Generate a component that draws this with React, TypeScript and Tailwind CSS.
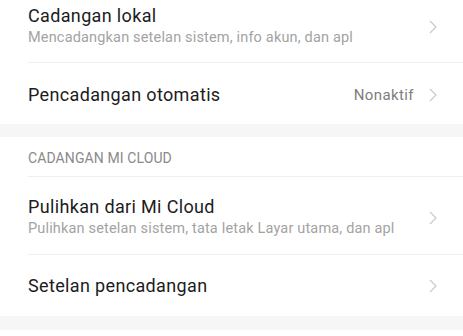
import React from 'react';

type Item = { title: string; subtitle?: string; value?: string };

function Chevron() {
  return (
    <svg width="8" height="14" viewBox="0 0 8 14" className="shrink-0">
      <path d="M1 1 L7 7 L1 13" fill="none" stroke="#c8c8c8" strokeWidth="1.1" />
    </svg>
  );
}

function Row({ item, cls }: { item: Item; cls: string }) {
  return (
    <div className={`flex items-center pl-[28px] pr-[26px] ${cls}`}>
      <div className="flex-1 min-w-0">
        <div className="text-[18px] leading-[22px] tracking-[0.35px] text-[#1c1c1c]">{item.title}</div>
        {item.subtitle && (
          <div className="text-[14.5px] leading-[20px] tracking-[0.17px] text-[#a3a3a3] mt-[1px] whitespace-nowrap">
            {item.subtitle}
          </div>
        )}
      </div>
      {item.value && (
        <span className="text-[15px] tracking-[0.4px] text-[#7d7d7d] mr-[15px]">{item.value}</span>
      )}
      <Chevron />
    </div>
  );
}

function Divider() {
  return <div className="ml-[28px] h-px bg-[#efefef]" />;
}

export default function App() {
  return (
    <div className="w-[463px] h-[336px] bg-white overflow-hidden font-['Roboto',sans-serif]">
      <Row cls="h-[62px] pb-[9px]" item={{ title: 'Cadangan lokal', subtitle: 'Mencadangkan setelan sistem, info akun, dan apl' }} />
      <Divider />
      <Row cls="h-[61px] pt-[3px]" item={{ title: 'Pencadangan otomatis', value: 'Nonaktif' }} />
      <div className="h-[13px] bg-[#f6f6f6]" />
      <div className="h-[39px] flex items-center pl-[28px] pt-[3px] text-[14px] tracking-[0.1px] text-[#8a8a8a] uppercase">
        Cadangan Mi Cloud
      </div>
      <Divider />
      <Row cls="h-[77px] pt-[4px]" item={{ title: 'Pulihkan dari Mi Cloud', subtitle: 'Pulihkan setelan sistem, tata letak Layar utama, dan apl' }} />
      <Divider />
      <Row cls="h-[61px]" item={{ title: 'Setelan pencadangan' }} />
      <div className="h-[14px] bg-[#f6f6f6]" />
    </div>
  );
}
